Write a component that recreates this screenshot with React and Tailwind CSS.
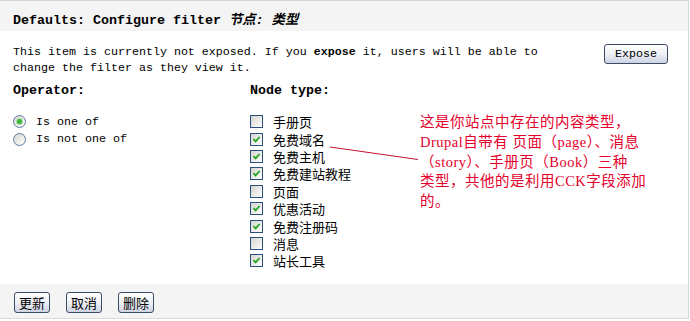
import React from "react";

const mono = "font-[Liberation_Mono,Noto_Sans_CJK_SC,monospace]";
const cjk = "font-[Noto_Sans_CJK_SC,sans-serif]";

function Radio({ checked }) {
  return (
    <span className="relative inline-flex w-[13px] h-[13px] rounded-full border border-[#5a7ba6] bg-linear-to-br from-[#d8d8d2] to-white items-center justify-center shrink-0">
      {checked && <span className="w-[5px] h-[5px] rounded-full bg-[#3bb53b] shadow-[0_0_0_1px_#a5dca5]" />}
    </span>
  );
}

function Check({ checked }) {
  return (
    <span className="inline-flex w-[13px] h-[13px] border border-[#2a4f7c] bg-linear-to-br from-[#d4d4cf] to-white items-center justify-center shrink-0">
      {checked && (
        <svg width="9" height="9" viewBox="0 0 9 9">
          <path d="M1.5 4.2 L3.6 6.4 L7.6 2" fill="none" stroke="#22a622" strokeWidth="1.8" />
        </svg>
      )}
    </span>
  );
}

const types = [
  ["手册页", false],
  ["免费域名", true],
  ["免费主机", true],
  ["免费建站教程", true],
  ["页面", false],
  ["优惠活动", true],
  ["免费注册码", true],
  ["消息", false],
  ["站长工具", true],
];

function Btn({ children }) {
  return (
    <button className={`w-[36px] h-[21px] border border-[#3d4b66] rounded-[3px] bg-linear-to-b from-white via-[#eef0f5] to-[#cdd2e2] text-[13px] leading-[19px] text-black ${cjk}`}>
      {children}
    </button>
  );
}

export default function App() {
  return (
    <div className="relative w-[690px] h-[321px] bg-white overflow-hidden">
      <div className="w-[689px] border-t border-r border-b border-[#d8d8d8] bg-white">
        <div className={`h-[30px] bg-[#f4f4f4] pl-[13px] pt-[13px] text-[13.33px] leading-[14px] font-bold text-black ${mono}`}>
          Defaults: Configure filter <em className="italic">节点: 类型</em>
        </div>
        <div className={`h-[253px] pl-[13px] pr-[20px] pt-[13px] text-[11.67px] leading-[16px] text-black ${mono}`}>
          <div className="flex justify-between items-start">
            <p className="w-[550px]">
              This item is currently not exposed. If you <strong>expose</strong> it, users will be able to change the filter as they view it.
            </p>
            <button className={`w-[64px] h-[20px] border border-[#3d4b66] rounded-[3px] bg-linear-to-b from-white via-[#eef0f5] to-[#cdd2e2] text-[11.67px] leading-[18px] text-black ${mono}`}>
              Expose
            </button>
          </div>
          <div className="flex mt-[7px]">
            <div className="w-[237px]">
              <div className="font-bold text-[13.33px] leading-[16px]">Operator:</div>
              <div className="mt-[14px]">
                <label className="flex items-center h-[17.5px] gap-[10px]">
                  <Radio checked />
                  <span>Is one of</span>
                </label>
                <label className="flex items-center h-[17.5px] gap-[10px]">
                  <Radio />
                  <span>Is not one of</span>
                </label>
              </div>
            </div>
            <div className="w-[170px]">
              <div className="font-bold text-[13.33px] leading-[16px]">Node type:</div>
              <div className="mt-[14px]">
                {types.map(([t, c]) => (
                  <label key={t} className="flex items-center h-[17.4px] gap-[10px]">
                    <Check checked={c} />
                    <span className={`text-[13px] leading-[17px] ${cjk}`}>{t}</span>
                  </label>
                ))}
              </div>
            </div>
            <div className={`pt-[30px] text-[14.5px] leading-[19.8px] text-[#e4002b] tracking-[0.5px] font-[Liberation_Serif,Noto_Sans_CJK_SC,serif]`}>
              <div>这是你站点中存在的内容类型，</div>
              <div>Drupal自带有 页面（page）、消息</div>
              <div>（story）、手册页（Book）三种</div>
              <div>类型，共他的是利用CCK字段添加</div>
              <div>的。</div>
            </div>
          </div>
        </div>
        <div className="h-[34px] bg-[#f4f4f4] pl-[14px] pt-[8px] flex items-start gap-[16px]">
          <Btn>更新</Btn>
          <Btn>取消</Btn>
          <Btn>删除</Btn>
        </div>
      </div>
      <svg className="absolute left-0 top-0 pointer-events-none" width="690" height="321">
        <line x1="330" y1="147" x2="418" y2="159.5" stroke="#c4102e" strokeWidth="1" />
      </svg>
    </div>
  );
}
